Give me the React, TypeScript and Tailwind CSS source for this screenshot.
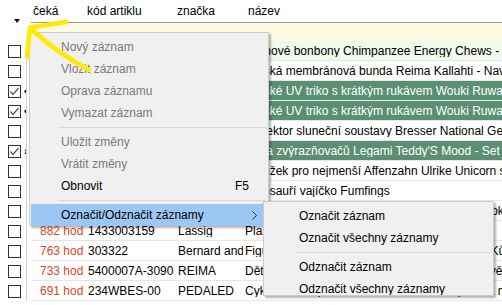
import React from "react";

type Row = {
  checked: boolean;
  ceka: string;
  kod: string;
  znacka: string;
  nazev: string;
  kind: "tint" | "white" | "green";
  mark?: string;
};

const rows: Row[] = [
  { checked: false, ceka: "958 hod", kod: "8595637101", znacka: "Chimpanzee", nazev: "Gumové bonbony Chimpanzee Energy Chews - tropické ovoce", kind: "tint" },
  { checked: false, ceka: "951 hod", kod: "5245-22", znacka: "Reima", nazev: "Dětská membránová bunda Reima Kallahti - Navy", kind: "white" },
  { checked: true, ceka: "940 hod", kod: "UV-TS-01", znacka: "Wouki", nazev: "Dětské UV triko s krátkým rukávem Wouki Ruwa - Navy", kind: "green", mark: "•" },
  { checked: true, ceka: "940 hod", kod: "UV-TS-02", znacka: "Wouki", nazev: "Dětské UV triko s krátkým rukávem Wouki Ruwa - Coral", kind: "green", mark: "•" },
  { checked: false, ceka: "930 hod", kod: "9109000", znacka: "Bresser", nazev: "Projektor sluneční soustavy Bresser National Geographic", kind: "white" },
  { checked: true, ceka: "922 hod", kod: "LG-TM-01", znacka: "Legami", nazev: "Sada zvýrazňovačů Legami Teddy'S Mood - Set Cute", kind: "green", mark: "›" },
  { checked: false, ceka: "910 hod", kod: "AFZ-UNI", znacka: "Affenzahn", nazev: "Batůžek pro nejmenší Affenzahn Ulrike Unicorn s kapsou", kind: "white" },
  { checked: false, ceka: "901 hod", kod: "FF-DINO", znacka: "Fumfings", nazev: "Dinosauří vajíčko Fumfings", kind: "white" },
  { checked: false, ceka: "895 hod", kod: "1433003160", znacka: "Lassig", nazev: "Dětská lahev na pití Lassig About Friends - Bookworm tkanička", kind: "white" },
  { checked: false, ceka: "882 hod", kod: "1433003159", znacka: "Lassig", nazev: "Plastová lahev Lassig 460 ml", kind: "white" },
  { checked: false, ceka: "763 hod", kod: "303322", znacka: "Bernard and Bianca", nazev: "Figurka na hraní Bernard and Bianca Farma - Kůň a jezdec", kind: "white" },
  { checked: false, ceka: "733 hod", kod: "5400007A-3090", znacka: "REIMA", nazev: "Dětská zimní kombinéza Reima Gotland - tmavě modrá kost", kind: "white" },
  { checked: false, ceka: "691 hod", kod: "234WBES-00", znacka: "PEDALED", nazev: "Cyklistická čepice Pedaled Essential Cap - bílá melange", kind: "white" },
];

function Checkbox({ checked }: { checked: boolean }) {
  return (
    <div className="flex h-[13px] w-[13px] shrink-0 items-center justify-center border border-[#333333] bg-white">
      {checked && (
        <svg width="11" height="11" viewBox="0 0 11 11">
          <polyline points="1.5,5.5 4,8.5 9.5,2" fill="none" stroke="#555555" strokeWidth="1.2" />
        </svg>
      )}
    </div>
  );
}

function DataRow({ r }: { r: Row }) {
  const bg =
    r.kind === "green"
      ? "bg-[#5b8f73] text-white"
      : r.kind === "tint"
      ? "bg-[#f1f8ec] text-black"
      : "bg-white text-black";
  const cekaColor = r.kind === "green" ? "text-white" : "text-[#e3461c]";
  return (
    <div className="flex h-[20px]">
      <div className="flex w-[27px] shrink-0 items-center border-r border-[#cfcfcf] bg-white pl-[8px]">
        <Checkbox checked={r.checked} />
        <div className="ml-[3px] w-[3px] overflow-hidden text-[11px] font-bold leading-none text-black">
          {r.mark ?? ""}
        </div>
      </div>
      <div className="w-[4px] shrink-0 bg-white" />
      <div className={`flex min-w-0 flex-1 items-center border-b border-[#e6e6e6] ${bg}`}>
        <div className={`w-[54px] shrink-0 overflow-hidden whitespace-nowrap pl-[9px] ${cekaColor}`}>{r.ceka}</div>
        <div className="w-[90px] shrink-0 overflow-hidden whitespace-nowrap pl-[3px]">{r.kod}</div>
        <div className="w-[68px] shrink-0 overflow-hidden whitespace-nowrap pl-[3px]">{r.znacka}</div>
        <div className="min-w-0 flex-1 overflow-hidden whitespace-nowrap pl-[2px]">{r.nazev}</div>
      </div>
    </div>
  );
}

function MenuItem({ label, disabled, shortcut }: { label: string; disabled?: boolean; shortcut?: string }) {
  return (
    <div className={`flex h-[22px] items-center pl-[31px] pr-[19px] ${disabled ? "text-[#7a7a7a]" : "text-black"}`}>
      <span>{label}</span>
      {shortcut && <span className="ml-auto">{shortcut}</span>}
    </div>
  );
}

function Separator({ left }: { left: string }) {
  return (
    <div className="flex h-[7px] items-center">
      <div className={`h-px flex-1 bg-[#d7d7d7] ${left} mr-[2px]`} />
    </div>
  );
}

function SubItem({ label }: { label: string }) {
  return <div className="flex h-[22px] items-center pl-[35px] text-black">{label}</div>;
}

export default function App() {
  return (
    <div className="relative h-[305px] w-[502px] overflow-hidden bg-white font-['Liberation_Sans',Arial,sans-serif] text-[12px] leading-none text-black">
      {/* header + filter */}
      <div className="flex">
        <div className="relative h-[41px] w-[31px] shrink-0">
          <svg className="absolute left-[14px] top-[19px]" width="6" height="4" viewBox="0 0 6 4">
            <polygon points="0,0 6,0 3,4" fill="#111111" />
          </svg>
        </div>
        <div className="flex min-w-0 flex-1 flex-col">
          <div className="flex h-[23px] items-center border-b border-[#9a9a9a] pb-[1px]">
            <div className="w-[54px] shrink-0 pl-[2px]">čeká</div>
            <div className="w-[90px] shrink-0 pl-[2px]">kód artiklu</div>
            <div className="w-[68px] shrink-0 pl-[2px]">značka</div>
            <div className="flex-1 pl-[5px]">název</div>
          </div>
          <div className="h-[18px] bg-[#fffbe3]" />
        </div>
      </div>

      {/* data rows */}
      <div className="flex flex-col">
        {rows.map((r, i) => (
          <DataRow key={i} r={r} />
        ))}
      </div>

      {/* context menu */}
      <div className="absolute left-[29px] top-[32px] w-[240px] border border-b-0 border-[#cccccc] bg-[#f0f0f0] pt-[3px] shadow-[2px_2px_2px_rgba(0,0,0,0.3)]">
        <MenuItem label="Nový záznam" disabled />
        <MenuItem label="Vložit záznam" disabled />
        <MenuItem label="Oprava záznamu" disabled />
        <MenuItem label="Vymazat záznam" disabled />
        <Separator left="ml-[28px]" />
        <MenuItem label="Uložit změny" disabled />
        <MenuItem label="Vrátit změny" disabled />
        <MenuItem label="Obnovit" shortcut="F5" />
        <Separator left="ml-[28px]" />
        <div className="mx-[1px] flex h-[22px] items-center bg-[#9cc7f5] pl-[30px] pr-[10px] text-black">
          <span>Označit/Odznačit záznamy</span>
          <svg className="ml-auto" width="5" height="9" viewBox="0 0 5 9">
            <polyline points="0.5,0.5 4.5,4.5 0.5,8.5" fill="none" stroke="#333333" strokeWidth="1" />
          </svg>
        </div>
      </div>

      {/* submenu */}
      <div className="absolute left-[263px] top-[201px] h-[95px] w-[231px] overflow-hidden border border-[#cccccc] bg-[#f0f0f0] pt-[3px] shadow-[2px_2px_2px_rgba(0,0,0,0.3)]">
        <SubItem label="Označit záznam" />
        <SubItem label="Označit všechny záznamy" />
        <Separator left="ml-[31px]" />
        <SubItem label="Odznačit záznam" />
        <SubItem label="Odznačit všechny záznamy" />
      </div>

      {/* yellow hand-drawn arrow */}
      <svg className="pointer-events-none absolute left-0 top-0" width="100" height="80" viewBox="0 0 100 80">
        <g fill="none" stroke="#ffea00" strokeWidth="4.5" strokeLinecap="round" strokeLinejoin="round">
          <path d="M66 22 L30 27.5 L27 57" />
          <path d="M31 29 Q56 52 89 70" />
        </g>
      </svg>
    </div>
  );
}
